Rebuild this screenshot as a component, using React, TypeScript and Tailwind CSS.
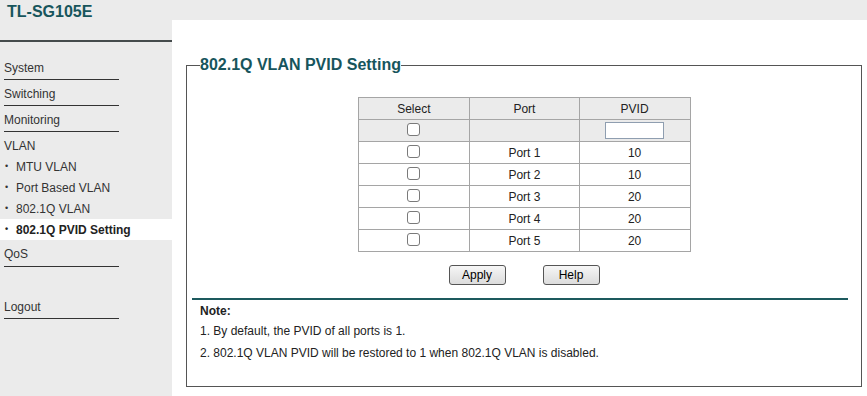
import React from "react";

const ports = [
  { name: "Port 1", pvid: 10 },
  { name: "Port 2", pvid: 10 },
  { name: "Port 3", pvid: 20 },
  { name: "Port 4", pvid: 20 },
  { name: "Port 5", pvid: 20 },
];

function Box() {
  return (
    <input
      type="checkbox"
      className="appearance-none block mx-auto -mt-[3px] w-[13px] h-[13px] bg-white border border-[#7a7a7a] rounded-[3px]"
    />
  );
}

function Sidebar() {
  return (
    <div className="w-[172px] shrink-0 bg-[#ebebeb] text-[12px] text-[#333]">
      <div className="h-[40px] pt-[3px] pl-[7px] text-[16px] leading-[18px] font-bold text-[#17555c]">
        TL-SG105E
      </div>
      <div className="h-[2px] bg-[#454b4c]" />
      <div className="mt-[12px]">
        {["System", "Switching", "Monitoring"].map((item) => (
          <div
            key={item}
            className="ml-[4px] w-[115px] pt-[7px] pb-[3px] leading-[15px] border-b border-[#333]"
          >
            {item}
          </div>
        ))}
        <div className="pl-[4px] h-[24px] pt-[7px] leading-[15px]">VLAN</div>
        {["MTU VLAN", "Port Based VLAN", "802.1Q VLAN", "802.1Q PVID Setting"].map(
          (item, i) => (
            <div
              key={item}
              className={
                i === 3
                  ? "h-[21px] pt-[1px] flex items-center bg-white font-bold text-[#222]"
                  : "h-[21px] pt-[1px] flex items-center"
              }
            >
              <span className="w-[16px] pl-[5px] text-[9px]">•</span>
              {item}
            </div>
          )
        )}
        <div className="ml-[4px] w-[115px] pt-[7px] pb-[4px] leading-[15px] border-b border-[#333]">
          QoS
        </div>
        <div className="mt-[26px] ml-[4px] w-[115px] pt-[7px] pb-[3px] leading-[15px] border-b border-[#333]">
          Logout
        </div>
      </div>
    </div>
  );
}

export default function App() {
  return (
    <div
      className="w-[867px] h-[396px] flex overflow-hidden bg-[#ebebeb]"
      style={{ fontFamily: '"Liberation Sans", Arial, sans-serif' }}
    >
      <Sidebar />
      <div className="flex-1 flex flex-col">
        <div className="h-[20px] shrink-0" />
        <div className="flex-1 bg-white pl-[14px] pr-[5px] pt-[36px]">
          <fieldset className="border border-[#555] h-[331px]">
            <legend className="ml-[13px] text-[16px] leading-[18px] font-bold text-[#17555c]">
              802.1Q VLAN PVID Setting
            </legend>
            <table className="mt-[23px] mx-auto w-[333px] border-collapse text-[12px] text-[#222] text-center">
              <thead>
                <tr className="bg-[#ebebeb]">
                  <th className="h-[22px] w-[112px] border border-[#a5a5a5] font-normal">Select</th>
                  <th className="h-[22px] w-[110px] border border-[#a5a5a5] font-normal">Port</th>
                  <th className="h-[22px] w-[111px] border border-[#a5a5a5] font-normal">PVID</th>
                </tr>
              </thead>
              <tbody>
                <tr className="bg-[#ebebeb]">
                  <td className="h-[22px] border border-[#a5a5a5]">
                    <Box />
                  </td>
                  <td className="h-[22px] border border-[#a5a5a5]" />
                  <td className="h-[22px] border border-[#a5a5a5]">
                    <input
                      type="text"
                      className="block mx-auto w-[59px] h-[17px] bg-white border border-[#8f9eb0]"
                    />
                  </td>
                </tr>
                {ports.map((p) => (
                  <tr key={p.name}>
                    <td className="h-[22px] border border-[#a5a5a5]">
                      <Box />
                    </td>
                    <td className="h-[22px] border border-[#a5a5a5]">{p.name}</td>
                    <td className="h-[22px] border border-[#a5a5a5]">{p.pvid}</td>
                  </tr>
                ))}
              </tbody>
            </table>
            <div className="mt-[13px] flex justify-center gap-[37px] text-[12px] text-black">
              <button className="w-[57px] h-[20px] border border-[#555] rounded-[3px] bg-gradient-to-b from-[#f6f6f6] to-[#dcdcdc]">
                Apply
              </button>
              <button className="w-[57px] h-[20px] border border-[#555] rounded-[3px] bg-gradient-to-b from-[#f6f6f6] to-[#dcdcdc]">
                Help
              </button>
            </div>
            <div className="mt-[13px] ml-[5px] mr-[13px] h-[2px] bg-[#1d5a5e]" />
            <div className="ml-[13px] pt-[3px] text-[12px] text-[#222]">
              <div className="leading-[16px] font-bold">Note:</div>
              <div className="mt-[4px] leading-[16px]">1. By default, the PVID of all ports is 1.</div>
              <div className="mt-[6px] leading-[16px]">
                2. 802.1Q VLAN PVID will be restored to 1 when 802.1Q VLAN is disabled.
              </div>
            </div>
          </fieldset>
        </div>
      </div>
    </div>
  );
}
